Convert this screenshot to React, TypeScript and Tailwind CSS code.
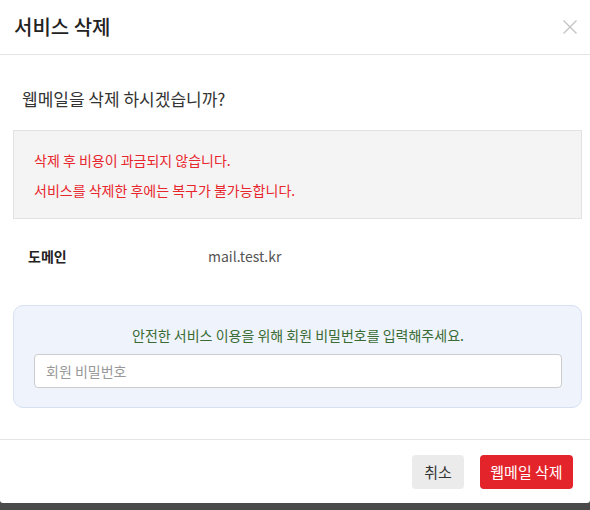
import React, { useState } from 'react';

const font = { fontFamily: '"Noto Sans CJK KR", "Noto Sans", sans-serif' };

const App: React.FC = () => {
  const [password, setPassword] = useState('');

  return (
    <div className="h-[510px] w-[590px] bg-[#4a4a4a] overflow-hidden" style={font}>
      <div className="h-[503px] bg-white flex flex-col rounded-b-[3px]">
        {/* Header */}
        <div className="h-[55px] border-b border-[#e5e5e5] flex items-center justify-between pl-[14px] pr-[12px]">
          <h2 className="text-[20px] font-medium text-[#222] leading-none">서비스 삭제</h2>
          <button className="w-[16px] h-[16px] flex items-center justify-center" aria-label="close">
            <svg width="16" height="16" viewBox="0 0 16 16" fill="none" stroke="#c4c4c4" strokeWidth="1.4">
              <path d="M1.5 1.5 L14.5 14.5 M14.5 1.5 L1.5 14.5" />
            </svg>
          </button>
        </div>

        {/* Body */}
        <div className="flex-1 pl-[13px] pr-[8px] pt-[30px]">
          <p className="pl-[9px] text-[17px] leading-[28px] text-[#333]">웹메일을 삭제 하시겠습니까?</p>

          <div className="mt-[17px] bg-[#f4f4f4] border border-[#e2e2e2] pl-[20px] pt-[14px] pb-[13px] text-[14px] leading-[30px] text-[#e8262d]">
            <p>삭제 후 비용이 과금되지 않습니다.</p>
            <p>서비스를 삭제한 후에는 복구가 불가능합니다.</p>
          </div>

          <div className="mt-[27px] flex items-center pl-[15px] text-[14px] leading-[20px]">
            <span className="w-[180px] font-bold text-[#222]">도메인</span>
            <span className="text-[#555]">mail.test.kr</span>
          </div>

          <div className="mt-[39px] bg-[#eef3fc] border border-[#d7e1f2] rounded-[10px] pl-[20px] pr-[19px] pt-[19px] pb-[19px]">
            <p className="text-center text-[14px] leading-[20px] text-[#3a6b35]">
              안전한 서비스 이용을 위해 회원 비밀번호를 입력해주세요.
            </p>
            <input
              type="password"
              value={password}
              onChange={e => setPassword(e.target.value)}
              placeholder="회원 비밀번호"
              className="mt-[9px] w-full h-[34px] bg-white border border-[#cccccc] rounded-[4px] px-[11px] text-[14px] text-[#333] placeholder:text-[#999] outline-none"
              style={font}
            />
          </div>
        </div>

        {/* Footer */}
        <div className="h-[64px] border-t border-[#e5e5e5] flex items-start justify-end gap-[16px] pt-[15px] pr-[17px]">
          <button className="h-[34px] w-[52px] rounded-[4px] bg-[#ebebeb] text-[15px] text-[#333]">취소</button>
          <button className="h-[34px] w-[93px] rounded-[4px] bg-[#e3242b] text-[15px] text-white">웹메일 삭제</button>
        </div>
      </div>
    </div>
  );
};

export default App;
